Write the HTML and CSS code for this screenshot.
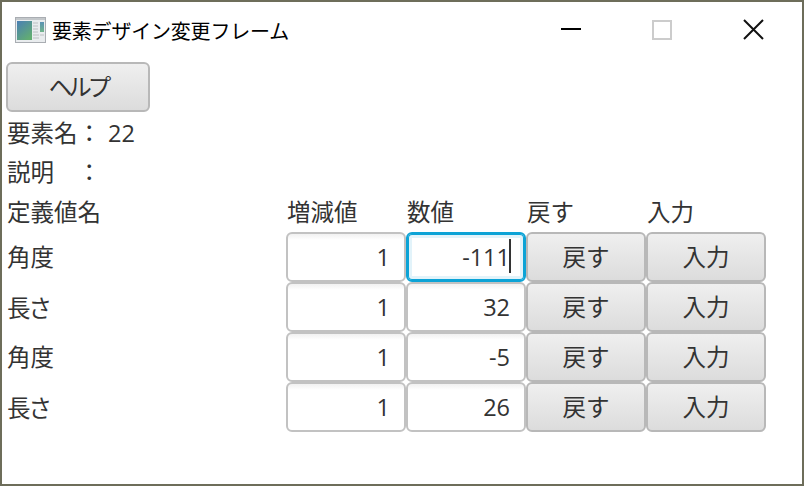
FILE: index.html
```html
<!DOCTYPE html>
<html lang="ja">
<head>
    <meta charset="UTF-8">
    <title>要素デザイン変更フレーム</title>
    <link rel="stylesheet" href="styles.css">
</head>
<body>
    <div class="window">
        <div class="title-bar">
            <svg class="app-icon" width="31" height="26" viewBox="0 0 31 26">
                <defs>
                    <linearGradient id="pane" x1="0" y1="0" x2="0.7" y2="1">
                        <stop offset="0" stop-color="#4a7fb5"/>
                        <stop offset="1" stop-color="#62ad72"/>
                    </linearGradient>
                    <linearGradient id="side" x1="0" y1="0" x2="0" y2="1">
                        <stop offset="0" stop-color="#5a92b4"/>
                        <stop offset="1" stop-color="#70b48a"/>
                    </linearGradient>
                </defs>
                <rect x="0.5" y="0.5" width="30" height="25" fill="#e9ecee" stroke="#a9adb2"/>
                <rect x="1" y="1" width="29" height="2" fill="#c3c7ca"/>
                <rect x="2" y="4" width="15" height="19" fill="url(#pane)"/>
                <rect x="25" y="5" width="4" height="10" fill="url(#side)"/>
                <path d="M18 6h5M18 9h5M18 12h5M18 15h5M18 18h6M18 21h6M25 18h4" stroke="#bcc0c2" stroke-width="1"/>
            </svg>
            <span class="title-text">要素デザイン変更フレーム</span>
            <div class="window-controls">
                <svg class="control" width="22" height="22" viewBox="0 0 22 22"><path d="M1 10h20" stroke="#000" stroke-width="2"/></svg>
                <svg class="control" width="22" height="22" viewBox="0 0 22 22"><rect x="2" y="2" width="18" height="18" fill="none" stroke="#ccc" stroke-width="2"/></svg>
                <svg class="control" width="22" height="22" viewBox="0 0 22 22"><path d="M2 1l19 19M21 1L2 20" stroke="#111" stroke-width="2" fill="none"/></svg>
            </div>
        </div>
        <div class="content">
            <button class="btn help-btn">ヘルプ</button>
            <div class="info-row name-row">要素名： 22</div>
            <div class="info-row desc-row">説明　：</div>
            <div class="table">
                <div class="head name-col">定義値名</div>
                <div class="head">増減値</div>
                <div class="head">数値</div>
                <div class="head">戻す</div>
                <div class="head">入力</div>

                <div class="name-col cell-label">角度</div>
                <div class="field">1</div>
                <div class="field focused">-111<span class="caret"></span></div>
                <button class="btn">戻す</button>
                <button class="btn">入力</button>

                <div class="name-col cell-label kana">長さ</div>
                <div class="field">1</div>
                <div class="field">32</div>
                <button class="btn">戻す</button>
                <button class="btn">入力</button>

                <div class="name-col cell-label">角度</div>
                <div class="field">1</div>
                <div class="field">-5</div>
                <button class="btn">戻す</button>
                <button class="btn">入力</button>

                <div class="name-col cell-label kana">長さ</div>
                <div class="field">1</div>
                <div class="field">26</div>
                <button class="btn">戻す</button>
                <button class="btn">入力</button>
            </div>
        </div>
    </div>
</body>
</html>
```

FILE: styles.css
```css
html, body {
    margin: 0;
    padding: 0;
}

body {
    width: 804px;
    height: 486px;
    overflow: hidden;
    background: #6d6d5a;
}

.window {
    box-sizing: border-box;
    width: 800px;
    height: 482px;
    margin: 2px;
    background: #fff;
    color: #333;
    font-family: "Open Sans", "Noto Sans CJK JP", sans-serif;
    font-size: 23.5px;
}

.title-bar {
    display: flex;
    align-items: center;
    height: 56px;
    padding-left: 13px;
    color: #000;
}

.app-icon {
    flex: none;
}

.title-text {
    margin-left: 6px;
    font-size: 20px;
    letter-spacing: -0.2px;
}

.window-controls {
    display: flex;
    gap: 69px;
    margin-left: auto;
    margin-right: 38px;
}

.control {
    display: block;
}

.content {
    padding: 4px 0 0 4px;
}

.btn {
    box-sizing: border-box;
    display: block;
    width: 120px;
    height: 50px;
    padding: 0 0 2px;
    border: 2px solid #b8b8b8;
    border-radius: 6px;
    background: linear-gradient(#efefef, #dcdcdc);
    color: #333;
    font: inherit;
}

.help-btn {
    width: 144px;
    letter-spacing: -4px;
}

.info-row {
    padding-left: 1px;
    white-space: pre;
}

.name-row {
    height: 42px;
    line-height: 42px;
    word-spacing: 1px;
}

.desc-row {
    height: 38px;
    line-height: 36px;
}

.table {
    display: grid;
    grid-template-columns: 280px repeat(4, 120px);
    grid-template-rows: 40px;
    grid-auto-rows: 50px;
}

.head {
    line-height: 40px;
    padding-left: 1px;
}

.name-col {
    padding-left: 1px;
}

.cell-label {
    line-height: 50px;
}

.kana {
    letter-spacing: -2px;
    line-height: 52px;
}

.field {
    box-sizing: border-box;
    display: flex;
    align-items: center;
    justify-content: flex-end;
    padding-right: 14px;
    border: 2px solid #c2c2c2;
    border-radius: 6px;
    background: linear-gradient(#f1f1f1, #fff 6px);
}

.focused {
    border-color: #0ca3d6;
    background: #fff;
    box-shadow: inset 0 0 0 1px #0ca3d6, inset 0 0 0 4px #e2f3fa;
    position: relative;
}

.caret {
    position: absolute;
    right: 13px;
    top: 5px;
    width: 2px;
    height: 34px;
    background: #333;
}
```
